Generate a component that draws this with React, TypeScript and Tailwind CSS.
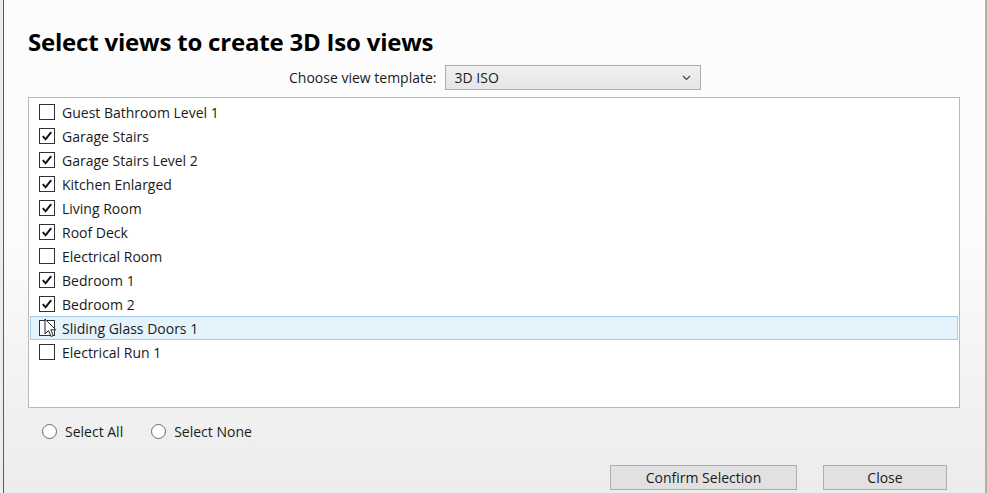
import React from "react";

const views = [
  { name: "Guest Bathroom Level 1", checked: false },
  { name: "Garage Stairs", checked: true },
  { name: "Garage Stairs Level 2", checked: true },
  { name: "Kitchen Enlarged", checked: true },
  { name: "Living Room", checked: true },
  { name: "Roof Deck", checked: true },
  { name: "Electrical Room", checked: false },
  { name: "Bedroom 1", checked: true },
  { name: "Bedroom 2", checked: true },
  { name: "Sliding Glass Doors 1", checked: false, selected: true },
  { name: "Electrical Run 1", checked: false },
];

function CheckBox({ checked }: { checked: boolean }) {
  return (
    <div className="w-[16px] h-[16px] border border-[#333333] bg-white flex items-center justify-center shrink-0">
      {checked && (
        <svg width="12" height="12" viewBox="0 0 12 12">
          <path d="M1.8 6.2 L4.6 9.3 L10.2 2.2" fill="none" stroke="#111" strokeWidth="2" />
        </svg>
      )}
    </div>
  );
}

function Cursor() {
  return (
    <svg className="absolute left-[13px] top-[1px]" width="13" height="20" viewBox="0 0 13 20">
      <path
        d="M1 1 L1 16 L4.5 12.5 L7 18.5 L9.3 17.5 L6.9 11.8 L11.8 11.8 Z"
        fill="white"
        stroke="#222"
        strokeWidth="1"
        strokeLinejoin="round"
      />
    </svg>
  );
}

function Radio({ label }: { label: string }) {
  return (
    <div className="flex items-center gap-[8px]">
      <div className="w-[15px] h-[15px] rounded-full border border-[#6b6b6b] bg-white" />
      <span>{label}</span>
    </div>
  );
}

export default function App() {
  return (
    <div
      className="w-[987px] h-[493px] flex overflow-hidden text-[#1a1a1a] bg-white"
      style={{ fontFamily: '"Open Sans", "Noto Sans", sans-serif' }}
    >
      {/* left edge of another window */}
      <div className="w-[4px] bg-[#ededed] border-r border-[#5a5a5a] shrink-0" />

      {/* Dialog body */}
      <div className="flex-1 flex flex-col bg-gradient-to-b from-[#fdfdfd] via-[#fbfbfb] to-[#ececec] pl-[24px] pr-[25px]">
        <h1 className="mt-[26px] text-[24px] leading-[32px] font-bold text-black tracking-[-0.2px]">
          Select views to create 3D Iso views
        </h1>

        <div className="mt-[7px] ml-[261px] flex items-center gap-[8px] text-[14px]">
          <span>Choose view template:</span>
          <div className="w-[256px] h-[25px] border border-[#acacac] bg-gradient-to-b from-[#f0f0f0] to-[#e5e5e5] flex items-center justify-between pl-[9px] pr-[9px]">
            <span>3D ISO</span>
            <svg width="9" height="6" viewBox="0 0 9 6">
              <path d="M1 1 L4.5 4.5 L8 1" fill="none" stroke="#444" strokeWidth="1.2" />
            </svg>
          </div>
        </div>

        {/* List box */}
        <div className="mt-[7px] h-[311px] w-[932px] border border-[#b9b9b9] bg-white pt-[2px] px-[1px] text-[14px]">
          {views.map((v) => (
            <div
              key={v.name}
              className={`relative h-[24px] flex items-center gap-[7px] pl-[8px] border ${
                v.selected ? "bg-[#e5f3fd] border-[#a6cdeb]" : "border-transparent"
              }`}
            >
              <CheckBox checked={v.checked} />
              <span>{v.name}</span>
              {v.selected && <Cursor />}
            </div>
          ))}
        </div>

        {/* Radio options */}
        <div className="mt-[13px] ml-[14px] flex items-center gap-[28px] text-[14px]">
          <Radio label="Select All" />
          <Radio label="Select None" />
        </div>

        {/* Buttons */}
        <div className="mt-auto mb-[3px] flex justify-end gap-[26px] pr-[13px] text-[14px]">
          <button className="w-[187px] h-[25px] border border-[#adadad] bg-[#e1e1e1] flex items-center justify-center">
            Confirm Selection
          </button>
          <button className="w-[124px] h-[25px] border border-[#adadad] bg-[#e1e1e1] flex items-center justify-center">
            Close
          </button>
        </div>
      </div>

      {/* right edge */}
      <div className="w-[2px] bg-[#b0b0b0] shrink-0" />
    </div>
  );
}
